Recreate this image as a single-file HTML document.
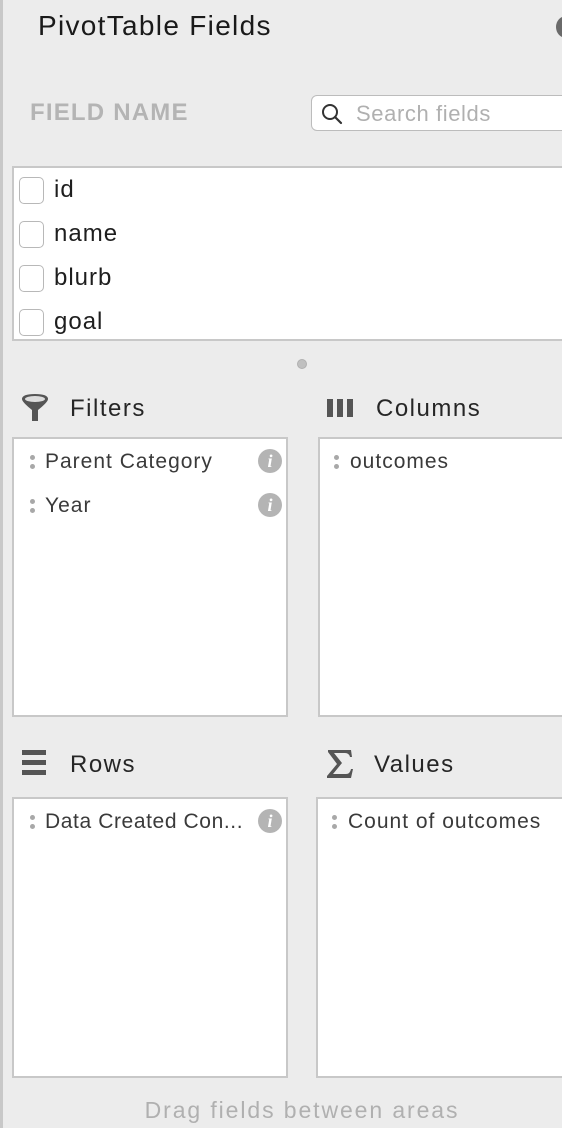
<!DOCTYPE html>
<html><head><meta charset="utf-8"><style>
body{margin:0;width:562px;height:1128px;background:#ececec;position:relative;overflow:hidden;font-family:"Liberation Sans",sans-serif;color:#262626}
.a{position:absolute}
.box{position:absolute;background:#fff;border:2px solid #c8c8c8;box-sizing:border-box}
.cb{position:absolute;left:5px;width:25px;height:27px;border:1px solid #b8b8b8;border-radius:5px;box-sizing:border-box;background:#fff}
.fl{position:absolute;left:40px;font-size:24px;color:#1e1e1e;letter-spacing:1px}
.it{position:absolute;font-size:21px;color:#3a3a3a;white-space:nowrap;letter-spacing:1px}
.dots{position:absolute;width:5px}
.dots:before,.dots:after{content:"";position:absolute;left:0;width:5px;height:5px;border-radius:50%;background:#a8a8a8}
.dots:before{top:0}.dots:after{top:9px}
.info{position:absolute;width:24px;height:24px;border-radius:50%;background:#b4b4b4;color:#fff;font:italic bold 18px "Liberation Serif",serif;text-align:center;line-height:24px}
.h{position:absolute;font-size:24px;color:#262626;letter-spacing:1.5px}
</style></head><body>
<div class="a" style="left:0;top:0;width:3px;height:1128px;background:#c8c8c8"></div>
<div class="a" style="left:38px;top:10px;font-size:28px;color:#1a1a1a;letter-spacing:1.3px">PivotTable Fields</div>
<div class="a" style="left:556px;top:16px;width:20px;height:22px;border-radius:50%;background:#6a6a6a"></div>
<div class="a" style="left:30px;top:99px;font-size:24px;font-weight:bold;color:#b4b4b4;letter-spacing:1.2px">FIELD NAME</div>
<div class="a" style="left:311px;top:95px;width:270px;height:36px;background:#fff;border:1px solid #bcbcbc;border-radius:6px;box-sizing:border-box"></div>
<svg class="a" style="left:320px;top:102px" width="24" height="24" viewBox="0 0 24 24"><circle cx="10" cy="10" r="7" fill="none" stroke="#333" stroke-width="2"/><path d="M15 15l6 6" stroke="#333" stroke-width="2.2" stroke-linecap="round"/></svg>
<div class="a" style="left:356px;top:101px;font-size:22px;color:#b0b0b0;letter-spacing:0.6px">Search fields</div>
<div class="box" style="left:12px;top:166px;width:570px;height:175px">
<div class="cb" style="top:9px"></div><div class="fl" style="top:8px">id</div>
<div class="cb" style="top:53px"></div><div class="fl" style="top:52px">name</div>
<div class="cb" style="top:97px"></div><div class="fl" style="top:96px">blurb</div>
<div class="cb" style="top:141px"></div><div class="fl" style="top:140px">goal</div>
</div>
<div class="a" style="left:297px;top:359px;width:10px;height:10px;border-radius:50%;background:#c0c0c0;border:1px solid #b0b0b0;box-sizing:border-box"></div>
<svg class="a" style="left:20px;top:393px" width="30" height="30" viewBox="0 0 30 30"><path d="M2 6 Q2 1 15 1 Q28 1 28 6 Q28 9 18 17 L18 28 L12 28 L12 17 Q2 9 2 6Z" fill="#555"/><ellipse cx="15" cy="6" rx="10" ry="3" fill="#ddd"/></svg>
<div class="h" style="left:70px;top:395px">Filters</div>
<svg class="a" style="left:327px;top:397px" width="28" height="22"><rect x="0" y="2" width="6" height="18" fill="#555"/><rect x="10" y="2" width="6" height="18" fill="#555"/><rect x="20" y="2" width="6" height="18" fill="#555"/></svg>
<div class="h" style="left:376px;top:395px">Columns</div>
<div class="box" style="left:12px;top:437px;width:276px;height:280px">
<div class="dots" style="left:16px;top:16px"></div><div class="it" style="left:31px;top:11px">Parent Category</div><div class="info" style="left:244px;top:10px">i</div>
<div class="dots" style="left:16px;top:60px"></div><div class="it" style="left:31px;top:55px">Year</div><div class="info" style="left:244px;top:54px">i</div>
</div>
<div class="box" style="left:318px;top:437px;width:264px;height:280px">
<div class="dots" style="left:14px;top:16px"></div><div class="it" style="left:30px;top:11px">outcomes</div>
</div>
<svg class="a" style="left:22px;top:750px" width="26" height="26"><rect x="0" y="0" width="24" height="5" fill="#555"/><rect x="0" y="10" width="24" height="5" fill="#555"/><rect x="0" y="20" width="24" height="5" fill="#555"/></svg>
<div class="h" style="left:70px;top:751px">Rows</div>
<svg class="a" style="left:326px;top:749px" width="28" height="30" viewBox="0 0 28 30"><path d="M2 1 L25 1 L26 8 L24 8 Q23 4 19 4 L8 4 L16 14 L7 25 L20 25 Q24 25 25 20 L27 20 L25 29 L1 29 L1 27 L11 15 L2 3Z" fill="#555"/></svg>
<div class="h" style="left:374px;top:751px">Values</div>
<div class="box" style="left:12px;top:797px;width:276px;height:281px">
<div class="dots" style="left:16px;top:16px"></div><div class="it" style="left:31px;top:11px;letter-spacing:0.6px">Data Created Con...</div><div class="info" style="left:244px;top:10px">i</div>
</div>
<div class="box" style="left:316px;top:797px;width:266px;height:281px">
<div class="dots" style="left:14px;top:16px"></div><div class="it" style="left:30px;top:11px">Count of outcomes</div>
</div>
<div class="a" style="left:0;width:604px;top:1097px;text-align:center;font-size:23px;color:#b0b0b0;letter-spacing:1.9px">Drag fields between areas</div>
</body></html>
